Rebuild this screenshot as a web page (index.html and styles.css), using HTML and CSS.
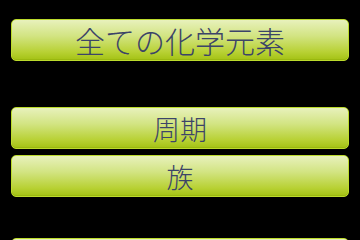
FILE: index.html
```html
<!DOCTYPE html>
<html lang="ja">
<head>
<meta charset="utf-8">
<link rel="stylesheet" href="styles.css">
</head>
<body>
<div class="menu">
  <div class="btn btn-big">全ての化学元素</div>
  <div class="btn btn-gap">周期</div>
  <div class="btn btn-near">族</div>
  <div class="btn btn-gap2"></div>
</div>
</body>
</html>
```
FILE: styles.css
```css
html, body {
  margin: 0;
  padding: 0;
  background: #000;
  width: 360px;
  height: 240px;
  overflow: hidden;
}
.menu {
  display: flex;
  flex-direction: column;
  padding: 19px 11px 0 11px;
}
.btn {
  box-sizing: border-box;
  height: 42px;
  flex: none;
  border: 1px solid #bcdb2c;
  border-radius: 5px;
  background: linear-gradient(to bottom, #e8f1bc 0%, #d2e482 40%, #b8d134 80%, #a4c214 100%);
  box-shadow: inset 0 -1px 0 #9ab810;
  display: flex;
  align-items: center;
  justify-content: center;
  font-family: "Noto Sans CJK JP", "Noto Sans", sans-serif;
  font-weight: 300;
  font-size: 27px;
  color: #3c4468;
  line-height: 1;
}
.btn-big {
  font-size: 30px;
}
.btn-gap {
  margin-top: 46px;
}
.btn-near {
  margin-top: 6px;
}
.btn-gap2 {
  margin-top: 41px;
}
```
